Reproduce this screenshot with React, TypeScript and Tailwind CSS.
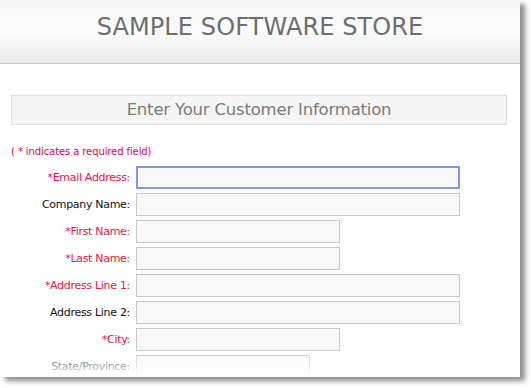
import React from "react";

/* Data */

const fields = [
    { label: "Email Address", required: true, width: "w-[324px]", focused: true },
    { label: "Company Name", required: false, width: "w-[324px]" },
    { label: "First Name", required: true, width: "w-[204px]" },
    { label: "Last Name", required: true, width: "w-[204px]" },
    { label: "Address Line 1", required: true, width: "w-[324px]" },
    { label: "Address Line 2", required: false, width: "w-[324px]" },
    { label: "City", required: true, width: "w-[204px]" },
    { label: "State/Province", required: false, width: "w-[174px]" },
];

/* Sub-components */

function FieldRow({ label, required, width, focused }: { label: string; required: boolean; width: string; focused?: boolean }) {
    return (
        <div className="flex items-center h-[23px]">
            <label className={`w-[130px] text-right text-[11px] tracking-[-0.3px] leading-none ${required ? "text-[#f5103f]" : "text-[#111]"}`}>
                {required ? "*" : ""}{label}:
            </label>
            <input
                className={`ml-[6px] h-[23px] ${width} bg-[#f8f8f8] outline-none ${focused ? "border-2 border-[#8198e2]" : "border border-[#c8c8c8]"}`}
            />
        </div>
    );
}

export default function App() {
    return (
        <main className="bg-white min-h-screen" style={{ fontFamily: "'DejaVu Sans', Verdana, sans-serif" }}>
            <div className="relative w-[520px] h-[377px] bg-white overflow-hidden shadow-[5px_4px_5px_rgba(0,0,0,0.45)]">
                {/* Header */}
                <header className="h-[64px] border-b border-[#c9c9c9] bg-gradient-to-b from-[#f6f6f6] via-[#fcfcfc] to-[#eaeaea] flex items-center justify-center">
                    <h1 className="text-[24px] text-[#6e6e6e] tracking-[0.1px] -mt-[9px]">SAMPLE SOFTWARE STORE</h1>
                </header>

                <section className="px-[11px]">
                    {/* Sub-header */}
                    <div className="mt-[31px] w-[496px] h-[30px] bg-[#f5f5f5] border border-[#dedede] flex items-center justify-center">
                        <h2 className="text-[16.5px] tracking-[-0.2px] text-[#7a7a7a]">Enter Your Customer Information</h2>
                    </div>

                    <p className="mt-[20px] text-[10px] tracking-[-0.1px] leading-[14px] text-[#e6004f]">( * indicates a required field)</p>
                </section>

                {/* Form */}
                <form className="mt-[7px] flex flex-col gap-[4px]">
                    {fields.map((field) => (
                        <FieldRow key={field.label} {...field} />
                    ))}
                </form>

                {/* Fade at bottom */}
                <div className="absolute inset-x-0 bottom-0 h-[28px] bg-gradient-to-b from-transparent to-white pointer-events-none" />
            </div>
        </main>
    );
}
